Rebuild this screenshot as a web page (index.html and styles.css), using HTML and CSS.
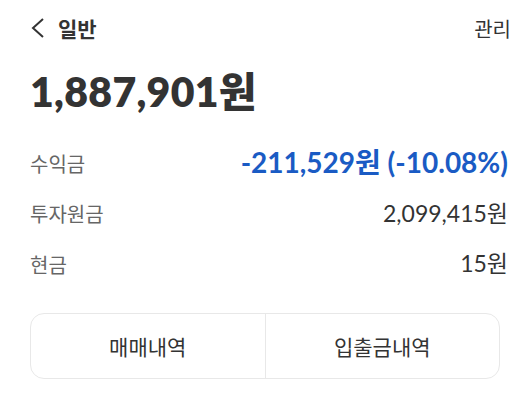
FILE: index.html
```html
<!DOCTYPE html>
<html lang="ko">
<head>
  <meta charset="UTF-8" />
  <meta name="viewport" content="width=device-width, initial-scale=1" />
  <title>일반</title>
  <link rel="stylesheet" href="styles.css">
</head>
<body>
  <div class="page">
    <div class="topbar">
      <div class="title">
        <svg class="back" width="16" height="22" viewBox="0 0 16 22">
          <path d="M13 2 L3 11 L13 20" fill="none" stroke="#333" stroke-width="2" />
        </svg>
        <span>일반</span>
      </div>
      <span class="manage">관리</span>
    </div>

    <div class="total">1,887,901원</div>

    <div class="rows">
      <div class="row">
        <span class="label">수익금</span>
        <span class="value loss">-211,529원 (-10.08%)</span>
      </div>
      <div class="row">
        <span class="label">투자원금</span>
        <span class="value">2,099,415원</span>
      </div>
      <div class="row">
        <span class="label">현금</span>
        <span class="value">15원</span>
      </div>
    </div>

    <div class="actions">
      <button>매매내역</button>
      <button>입출금내역</button>
    </div>
  </div>
</body>
</html>
```

FILE: styles.css
```css
body {
  margin: 0;
  background: #fff;
  color: #333;
  font-family: Lato, "Noto Sans CJK KR", sans-serif;
}
.page {
  padding: 0 24px 0 30px;
}
.topbar {
  display: flex;
  justify-content: space-between;
  align-items: center;
  height: 56px;
}
.title {
  display: flex;
  align-items: center;
  gap: 12px;
  font-size: 21px;
  font-weight: bold;
}
.back {
  display: block;
}
.manage {
  font-size: 20px;
  color: #333;
  margin-right: -3px;
}
.total {
  font-size: 41px;
  font-weight: 800;
  margin-top: 11px;
  line-height: 50px;
  letter-spacing: 0.3px;
}
.rows {
  margin-top: 19px;
}
.row {
  display: flex;
  justify-content: space-between;
  align-items: center;
  height: 50.5px;
}
.label {
  font-size: 20px;
  color: #666;
  padding-top: 4px;
}
.value {
  font-size: 23px;
  color: #333;
}
.loss {
  color: #1a5bc4;
  font-weight: bold;
  font-size: 28px;
}
.actions {
  display: flex;
  margin: 25px 8px 0 0;
  border: 1px solid #e8e8e8;
  border-radius: 14px;
  height: 64px;
}
.actions button {
  flex: 1;
  background: none;
  border: none;
  font-family: inherit;
  font-size: 21px;
  color: #333;
}
.actions button + button {
  border-left: 1px solid #e8e8e8;
}
```
